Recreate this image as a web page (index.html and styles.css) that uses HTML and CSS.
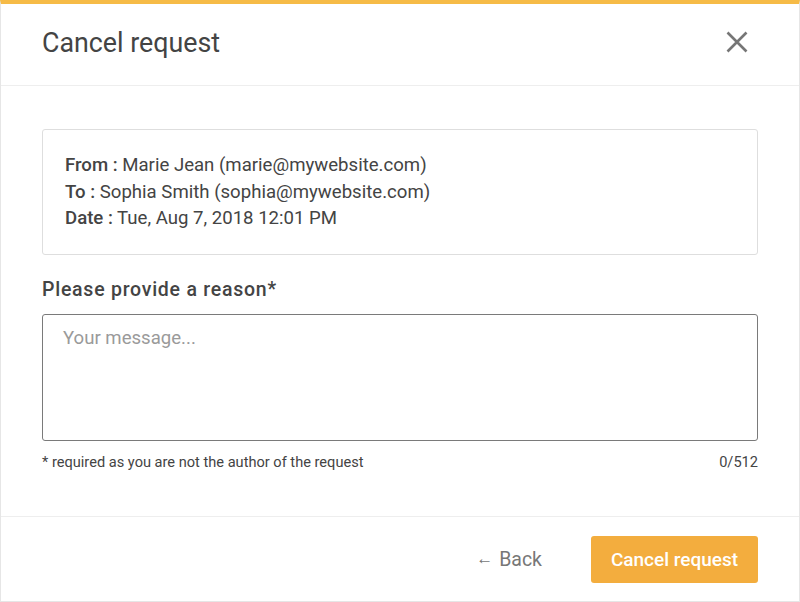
FILE: index.html
```html
<!DOCTYPE html>
<html lang="en">
<head>
<meta charset="utf-8">
<title>Cancel request</title>
<link rel="stylesheet" href="styles.css">
</head>
<body>
<div class="modal">
  <header class="modal-header">
    <h1 class="modal-title">Cancel request</h1>
    <button class="close" aria-label="Close">
      <svg width="22" height="22" viewBox="0 0 22 22"><path d="M1.5 1.5L20.5 20.5M20.5 1.5L1.5 20.5" stroke="#767676" stroke-width="2.6" fill="none"/></svg>
    </button>
  </header>
  <main class="modal-body">
    <div class="info">
      <div class="info-line"><span class="lbl">From :</span> Marie Jean (marie@mywebsite.com)</div>
      <div class="info-line"><span class="lbl">To :</span> Sophia Smith (sophia@mywebsite.com)</div>
      <div class="info-line"><span class="lbl">Date :</span> Tue, Aug 7, 2018 12:01 PM</div>
    </div>
    <label class="field-label" for="reason">Please provide a reason*</label>
    <textarea id="reason" class="field" placeholder="Your message..."></textarea>
    <div class="hint-row">
      <span>* required as you are not the author of the request</span>
      <span>0/512</span>
    </div>
  </main>
  <footer class="modal-footer">
    <button class="back"><span class="arrow">&#8592;</span> Back</button>
    <button class="primary">Cancel request</button>
  </footer>
</div>
</body>
</html>
```
FILE: styles.css
```css
* { box-sizing: border-box; }
html, body { margin: 0; padding: 0; }
body {
  font-family: Roboto, "Liberation Sans", sans-serif;
  color: #444;
  background: #fff;
}
.modal {
  width: 800px;
  height: 602px;
  border: 1px solid #e6e6e6;
  border-top: 4px solid #f6bb47;
  display: flex;
  flex-direction: column;
}
.modal-header {
  height: 82px;
  flex: none;
  display: flex;
  align-items: center;
  justify-content: space-between;
  padding: 0 41px 0 41px;
  border-bottom: 1px solid #eeeeee;
}
.modal-title {
  margin: 0 0 4px 0;
  font-size: 26.8px;
  font-weight: 400;
  color: #444;
}
.close {
  border: 0;
  background: none;
  padding: 0;
  width: 22px;
  height: 22px;
  margin: 0 10px 5px 0;
  cursor: pointer;
  display: flex;
}
.modal-body {
  flex: 1;
  padding: 43px 41px 0 41px;
  border-bottom: 1px solid #eeeeee;
}
.info {
  border: 1px solid #dedede;
  border-radius: 3px;
  padding: 22px 22px;
  font-size: 18.6px;
  line-height: 26.5px;
  color: #444;
}
.lbl { font-weight: 500; }
.field-label {
  display: block;
  margin-top: 23px;
  font-size: 19.5px;
  font-weight: 500;
  letter-spacing: 0.75px;
  line-height: 24px;
  color: #444;
}
.field {
  display: block;
  width: 100%;
  height: 127px;
  margin-top: 12px;
  border: 1px solid #7a7a7a;
  border-radius: 3px;
  padding: 10px 20px;
  font-family: inherit;
  font-size: 18.6px;
  line-height: 26px;
  color: #444;
  resize: none;
  outline: none;
}
.field::placeholder { color: #9a9a9a; }
.hint-row {
  display: flex;
  justify-content: space-between;
  margin-top: 12px;
  font-size: 14.6px;
  line-height: 18px;
  color: #444;
}
.modal-footer {
  height: 84px;
  flex: none;
  display: flex;
  align-items: center;
  justify-content: flex-end;
  padding: 0 41px;
  gap: 49px;
}
.back {
  border: 0;
  background: none;
  font-family: inherit;
  font-size: 19.5px;
  color: #777;
  padding: 0;
  cursor: pointer;
  display: flex;
  align-items: center;
  gap: 6px;
}
.arrow { font-size: 17px; position: relative; top: -1px; }
.primary {
  width: 167px;
  height: 47px;
  border: 0;
  border-radius: 3px;
  background: #f3ad3e;
  color: #fff;
  font-family: inherit;
  font-size: 19px;
  font-weight: 500;
  cursor: pointer;
}
```
